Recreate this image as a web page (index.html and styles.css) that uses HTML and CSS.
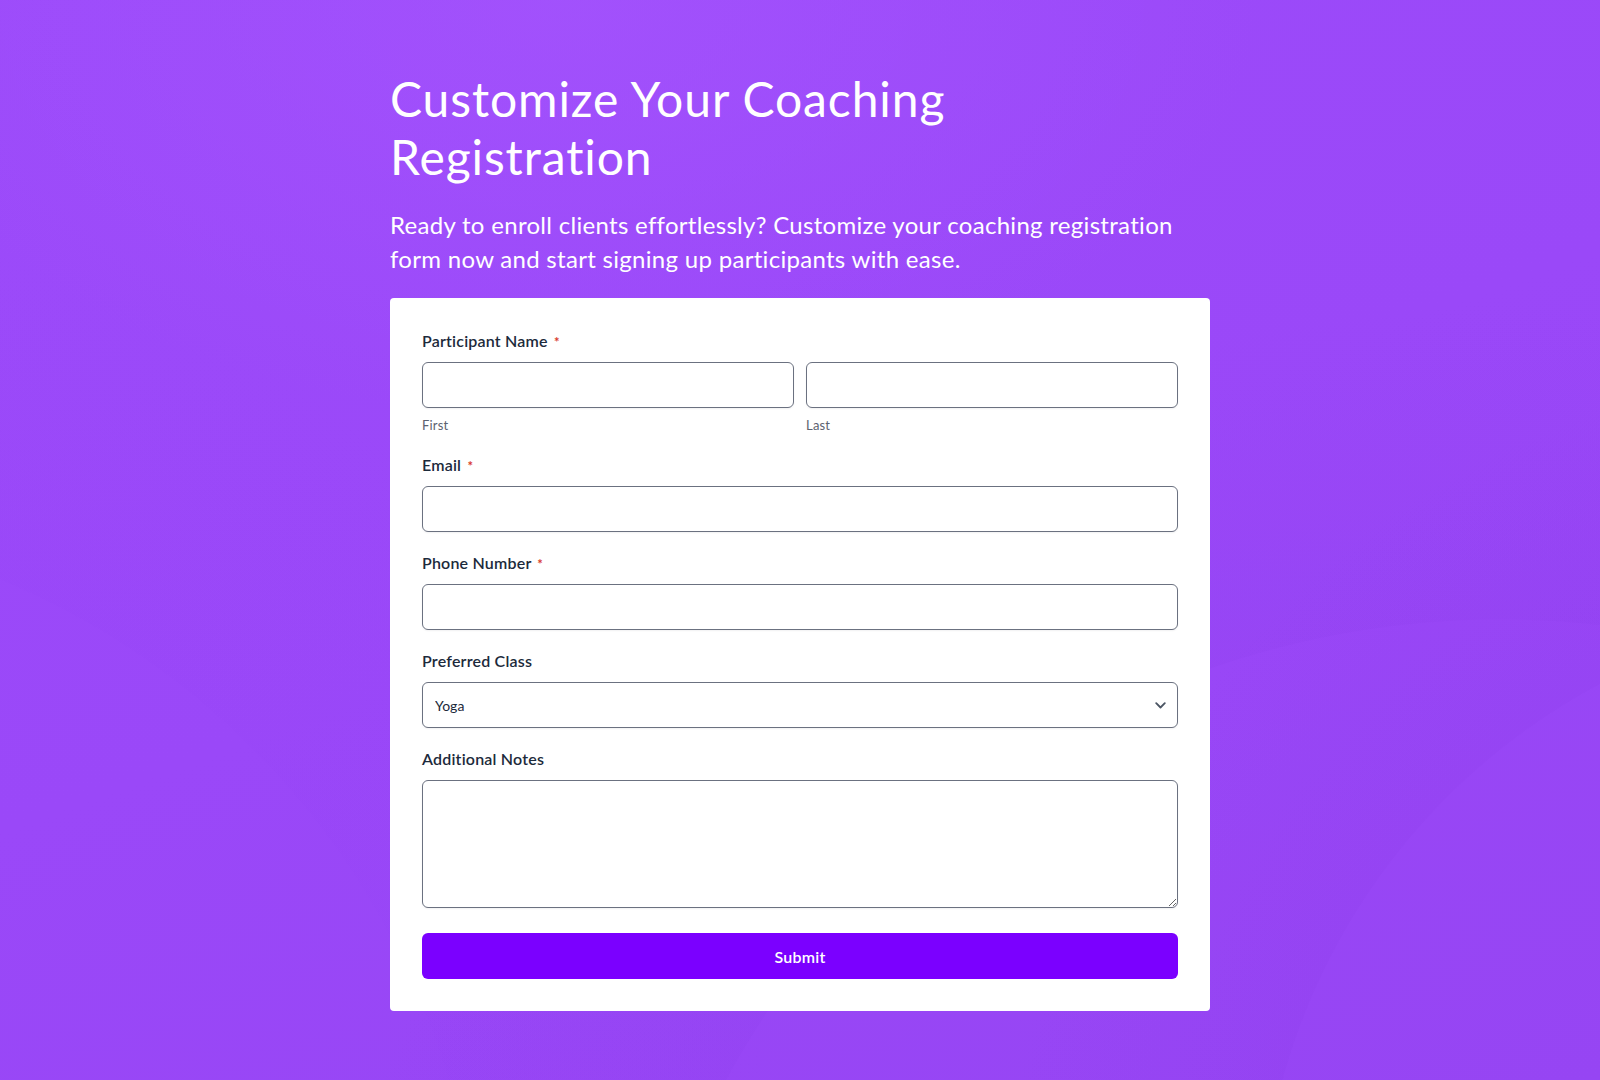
FILE: index.html
```html
<!DOCTYPE html>
<html lang="en">
<head>
<meta charset="utf-8">
<title>Customize Your Coaching Registration</title>
<link rel="stylesheet" href="styles.css">
</head>
<body>
<div class="bg"></div>
<main class="page">
  <h1 class="title">Customize Your Coaching Registration</h1>
  <p class="subtitle">Ready to enroll clients effortlessly? Customize your coaching registration form now and start signing up participants with ease.</p>
  <form class="card">
    <div class="field">
      <label class="label">Participant Name <span class="req">*</span></label>
      <div class="name-row">
        <div class="name-col">
          <input class="input" type="text">
          <span class="sublabel">First</span>
        </div>
        <div class="name-col">
          <input class="input" type="text">
          <span class="sublabel">Last</span>
        </div>
      </div>
    </div>
    <div class="field">
      <label class="label">Email <span class="req">*</span></label>
      <input class="input" type="email">
    </div>
    <div class="field">
      <label class="label">Phone Number <span class="req">*</span></label>
      <input class="input" type="tel">
    </div>
    <div class="field">
      <label class="label">Preferred Class</label>
      <div class="select-wrap">
        <select class="input select">
          <option>Yoga</option>
          <option>Pilates</option>
          <option>Strength</option>
        </select>
        <svg class="chevron" width="11" height="7" viewBox="0 0 11 7"><path d="M1.2 1.2 L5.5 5.5 L9.8 1.2" fill="none" stroke="#4b5563" stroke-width="1.8" stroke-linecap="round" stroke-linejoin="round"/></svg>
      </div>
    </div>
    <div class="field">
      <label class="label">Additional Notes</label>
      <textarea class="input textarea"></textarea>
    </div>
    <button class="submit" type="button">Submit</button>
  </form>
</main>
</body>
</html>
```

FILE: styles.css
```css
* { box-sizing: border-box; }
html, body { margin: 0; padding: 0; }
body {
  min-height: 1080px;
  font-family: Lato, "Noto Sans", sans-serif;
  font-variant-ligatures: none;
  background-color: #9a48f8;
  position: relative;
  overflow: hidden;
}
.bg {
  position: absolute;
  inset: 0;
  z-index: 0;
  background:
    radial-gradient(ellipse 700px 420px at 560px 0px, rgba(168, 88, 255, 0.5), rgba(168, 88, 255, 0) 100%),
    radial-gradient(circle at 1900px 1250px, rgba(140, 60, 235, 0) 0, rgba(140, 60, 235, 0) 640px, rgba(138, 58, 232, 0.15) 641px, rgba(138, 58, 232, 0) 900px),
    radial-gradient(circle at 1500px 1500px, rgba(150, 70, 245, 0) 0, rgba(150, 70, 245, 0) 880px, rgba(140, 62, 236, 0.18) 881px, rgba(140, 62, 236, 0) 1200px),
    radial-gradient(circle at -300px 1300px, rgba(160, 80, 255, 0) 0, rgba(160, 80, 255, 0) 780px, rgba(150, 68, 246, 0.18) 781px, rgba(150, 68, 246, 0) 1100px),
    linear-gradient(160deg, #9c4bfa 0%, #9a48f8 50%, #9645f3 100%);
}
.page {
  position: relative;
  z-index: 1;
  width: 820px;
  margin: 0 auto;
  padding-top: 70px;
}
.title {
  margin: 0;
  font-size: 48px;
  line-height: 57.6px;
  font-weight: 400;
  letter-spacing: 0.9px;
  color: #ffffff;
  max-width: 640px;
}
.subtitle {
  margin: 23px 0 23px;
  font-size: 24px;
  line-height: 33.6px;
  font-weight: 400;
  letter-spacing: 0.3px;
  color: #ffffff;
}
.card {
  background: #ffffff;
  border-radius: 4px;
  padding: 32px 32px 32px;
  display: flex;
  flex-direction: column;
  gap: 20px;
}
.field {
  display: flex;
  flex-direction: column;
}
.label {
  display: block;
  height: 22px;
  font-size: 16px;
  line-height: 22px;
  font-weight: 600;
  letter-spacing: 0.2px;
  color: #1c2a3b;
  margin-bottom: 10px;
}
.req {
  color: #d83a2c;
  font-size: 13px;
  line-height: 0;
  font-weight: 700;
  margin-left: 2px;
}
.name-row {
  display: grid;
  grid-template-columns: 1fr 1fr;
  gap: 12px;
}
.name-col {
  display: flex;
  flex-direction: column;
}
.sublabel {
  margin-top: 8px;
  font-size: 13px;
  line-height: 18px;
  letter-spacing: 0.2px;
  color: #5c6270;
}
.input {
  width: 100%;
  height: 46px;
  border: 1px solid #6b7180;
  border-radius: 6px;
  background: #ffffff;
  font-family: Lato, "Noto Sans", sans-serif;
  font-size: 14px;
  color: #1c2a3b;
  padding: 0 12px;
  box-shadow: 0 1px 2px rgba(16, 24, 40, 0.06);
  outline: none;
}
.select-wrap {
  position: relative;
}
.select {
  appearance: none;
  -webkit-appearance: none;
  padding-right: 36px;
}
.chevron {
  position: absolute;
  right: 12px;
  top: 20px;
  pointer-events: none;
}
.textarea {
  height: 128px;
  padding: 10px 12px;
  resize: vertical;
  display: block;
}
.submit {
  margin-top: 5px;
  height: 46px;
  width: 100%;
  border: none;
  border-radius: 6px;
  background: #7b00ff;
  color: #ffffff;
  font-family: Lato, "Noto Sans", sans-serif;
  font-size: 16px;
  font-weight: 600;
  letter-spacing: 0.2px;
  cursor: pointer;
}
```
